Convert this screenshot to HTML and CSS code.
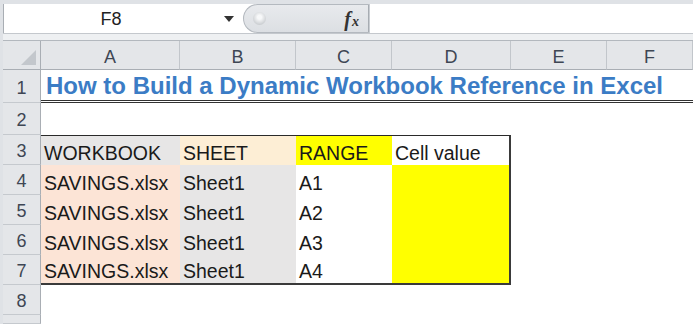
FILE: index.html
```html
<!DOCTYPE html>
<html>
<head>
<meta charset="utf-8">
<link rel="stylesheet" href="styles.css">
</head>
<body>
<div class="app">
  <div class="fbar">
    <div class="namebox">
      <span class="ref">F8</span>
      <svg class="dd" width="10" height="6" viewBox="0 0 10 6"><path d="M0 0H10L5 6Z" fill="#333"/></svg>
    </div>
    <div class="pill">
      <span class="knob"></span>
      <span class="fx"><i>f</i><i class="x">x</i></span>
    </div>
    <div class="input"></div>
  </div>
  <div class="band"></div>
  <div class="sheet">
    <div class="corner"><svg width="15" height="15" viewBox="0 0 15 15"><path d="M15 0V15H0Z" fill="#c3c7cc"/></svg></div>
    <div class="ch">A</div><div class="ch">B</div><div class="ch">C</div><div class="ch">D</div><div class="ch">E</div><div class="ch">F</div>

    <div class="rh">1</div>
    <div class="c title">How to Build a Dynamic Workbook Reference in Excel</div>

    <div class="rh">2</div>
    <div class="c row2"></div>

    <div class="rh">3</div>
    <div class="c t top gray">WORKBOOK</div>
    <div class="c t top cream">SHEET</div>
    <div class="c t top yellow">RANGE</div>
    <div class="c t top right">Cell value</div>
    <div class="c"></div><div class="c"></div>

    <div class="rh">4</div>
    <div class="c t peach">SAVINGS.xlsx</div>
    <div class="c t gray">Sheet1</div>
    <div class="c t">A1</div>
    <div class="c t right yellow"></div>
    <div class="c"></div><div class="c"></div>

    <div class="rh">5</div>
    <div class="c t peach">SAVINGS.xlsx</div>
    <div class="c t gray">Sheet1</div>
    <div class="c t">A2</div>
    <div class="c t right yellow"></div>
    <div class="c"></div><div class="c"></div>

    <div class="rh">6</div>
    <div class="c t peach">SAVINGS.xlsx</div>
    <div class="c t gray">Sheet1</div>
    <div class="c t">A3</div>
    <div class="c t right yellow"></div>
    <div class="c"></div><div class="c"></div>

    <div class="rh">7</div>
    <div class="c t bottom peach">SAVINGS.xlsx</div>
    <div class="c t bottom gray">Sheet1</div>
    <div class="c t bottom">A4</div>
    <div class="c t bottom right yellow"></div>
    <div class="c"></div><div class="c"></div>

    <div class="rh">8</div>
    <div class="c wide"></div>

    <div class="rh"></div>
    <div class="c wide"></div>
  </div>
</div>
</body>
</html>
```
FILE: styles.css
```css
* { box-sizing: border-box; }
html, body { margin: 0; padding: 0; background: #fff; }
body { width: 693px; height: 324px; overflow: hidden; font-family: "Liberation Sans", Arial, sans-serif; }

.app { border-left: 3px solid #dfe2e6; height: 324px; display: flex; flex-direction: column; }

.fbar {
  height: 34px;
  display: flex;
  background: #dfe2e6;
  padding-top: 4px;
  border-bottom: 1px solid #c4c8cd;
}
.namebox {
  width: 254px;
  background: #fff;
  display: flex;
  align-items: center;
  border-left: 1px solid #a9aeb4;
}
.ref { width: 214px; text-align: center; font-size: 18px; color: #222; padding-top: 2px; }
.dd { margin-left: 6px; }
.pill {
  width: 126px;
  margin-left: -14px;
  background: linear-gradient(#e8eaed, #dcdfe3);
  border-radius: 15px 0 0 15px;
  border: 1px solid #b4b9bf;
  border-right: 1px solid #a7acb2;
  display: flex;
  align-items: center;
  padding-left: 9px;
}
.knob {
  width: 13px; height: 13px; border-radius: 50%;
  background: radial-gradient(circle at 50% 40%, #f7f8f9 20%, #b4b8bd);
}
.fx { margin-left: auto; margin-right: 9px; font-family: "Liberation Serif", serif; font-size: 20px; color: #333; font-weight: bold; padding-top: 2px; }
.fx .x { font-size: 14px; margin-left: 1px; }
.input { flex: 1; background: #fff; border-left: 1px solid #c9cdd2; }

.band { height: 7px; background: #eef0f2; border-bottom: 1px solid #b3b8be; }

.sheet {
  flex: 1;
  display: grid;
  grid-template-columns: 38px 139px 116px 96px 119px 96px 1fr;
  grid-template-rows: 29px 33px 32px 30px 30px 30px 30px 30px 30px 1fr;
}
.corner {
  background: #e4e6e9;
  border-right: 1px solid #a9aeb4;
  border-bottom: 1px solid #a9aeb4;
  display: flex; align-items: flex-end; justify-content: flex-end;
  padding: 0 4px 4px 0;
}
.ch {
  background: #e4e6e9;
  border-right: 1px solid #c2c6cb;
  border-bottom: 1px solid #a9aeb4;
  display: flex; align-items: center; justify-content: center;
  font-size: 18px; color: #3e4654;
  padding-top: 4px;
}
.rh {
  background: #e4e6e9;
  border-right: 1px solid #a9aeb4;
  border-bottom: 1px solid #c5c9ce;
  display: flex; align-items: center; justify-content: center;
  font-size: 18px; color: #3e4654;
  padding-top: 4px;
}
.c {
  font-size: 19.5px; color: #1a1a1a;
  display: flex; align-items: flex-end;
  padding: 0 0 0 3px;
  white-space: nowrap;
}
.title {
  grid-column: 2 / 8;
  font-weight: bold; font-size: 24px; color: #3b7cc5;
  border-bottom: 3px double #333;
  padding: 0 0 0 5px;
}
.row2 { grid-column: 2 / 8; }
.wide { grid-column: 2 / 8; }
.t.top { border-top: 1px solid #2a2a2a; }
.t.bottom { border-bottom: 2px solid #3a3a3a; }
.t.right { border-right: 2px solid #3a3a3a; }
.gray { background: #e7e6e6; }
.cream { background: #fdeed5; }
.yellow { background: #ffff00; }
.peach { background: #fce4d6; }
```
